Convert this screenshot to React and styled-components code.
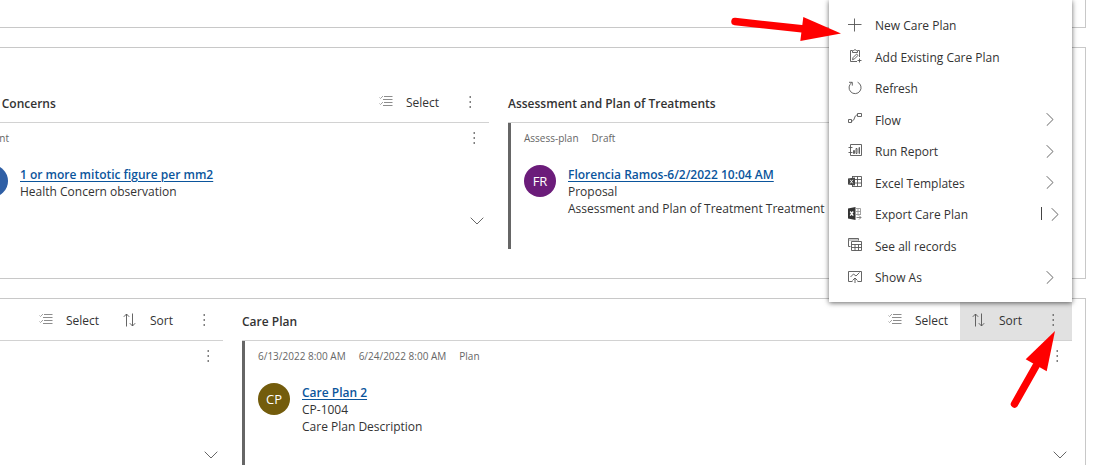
import React from "react";
import styled, { createGlobalStyle, css } from "styled-components";

const GlobalStyle = createGlobalStyle`
  * {
    box-sizing: border-box;
  }
  body {
    margin: 0;
    overflow: hidden;
    background: #ffffff;
    color: #333333;
    font-family: "Segoe UI", "Open Sans", "Noto Sans", sans-serif;
    font-size: 12px;
    line-height: 17px;
  }
`;

/* The form is scrolled sideways, its left gutter is outside the window */
const Page = styled.main`
  display: flex;
  flex-direction: column;
  gap: 19px;
  height: 100vh;
  margin-left: -40px;
  padding-right: 11px;
  overflow: hidden;
`;
const Section = styled.section`
  flex: none;
  display: grid;
  grid-template-columns: ${({ $columns }) => $columns || "1fr"};
  column-gap: 19px;
  padding: ${({ $top }) => $top || 0}px 13px 29px 0;
  border: 1px solid #c8c8c8;
  border-left: 0;
`;
const FirstSection = styled(Section)`
  height: 28px;
  padding: 0;
  border-top: 0;
`;
const Panel = styled.div`
  display: flex;
  flex-direction: column;
  min-width: 0;
`;
const PanelHeader = styled.header`
  position: relative;
  display: flex;
  align-items: stretch;
  height: 42px;
  border-bottom: 1px solid #d2d2d2;
`;
const Title = styled.h2`
  flex: 1;
  align-self: center;
  margin: 0;
  padding-top: 3px;
  font-size: 12px;
  font-weight: 600;
  white-space: nowrap;
`;
const IconButton = styled.button`
  display: flex;
  align-items: center;
  justify-content: center;
  padding: 0;
  border: 0;
  background: none;
  color: #333333;
  cursor: pointer;
`;
const CommandButton = styled(IconButton)`
  gap: 13px;
  padding: 0 12px;
  font: inherit;

  span {
    padding-top: 2px;
  }
  ${({ $active }) =>
    $active &&
    css`
      background: #e1e1e1;
    `}
`;
const MoreButton = styled(IconButton)`
  width: 38px;
  background: ${({ $active }) => ($active ? "#e1e1e1" : "none")};
`;
const Card = styled.article`
  display: flex;
  justify-content: space-between;
  min-height: ${({ $tall }) => ($tall ? 142 : 126)}px;
  padding: 7px 4px 20px 13px;
  border-left: 3px solid #666666;
`;
const Meta = styled.div`
  display: flex;
  gap: 13px;
  height: 35px;
  color: #666666;
  font-size: 10px;
`;
const Record = styled.div`
  display: flex;
  gap: 12px;
  white-space: nowrap;
`;
const RecordText = styled.div`
  padding-top: 1px;
`;
const Avatar = styled.div`
  flex: none;
  display: flex;
  align-items: center;
  justify-content: center;
  width: 32px;
  height: 32px;
  border-radius: 50%;
  background: ${({ $color }) => $color};
  color: #ffffff;
  font-size: 13px;
`;
const RecordLink = styled.a`
  color: #0b559c;
  font-weight: 600;
  text-underline-offset: 2px;
`;
const CardActions = styled.div`
  display: flex;
  flex-direction: column;
  justify-content: space-between;
  width: 16px;
`;
const CardMore = styled(IconButton)`
  width: 10px;
  height: 16px;
`;
const Expand = styled(IconButton)`
  width: 16px;
  height: 16px;
`;
const Menu = styled.ul`
  position: absolute;
  right: 0;
  bottom: calc(100% - 3px);
  z-index: 2;
  width: 243px;
  margin: 0;
  padding: 9px 0 10px;
  list-style: none;
  background: #ffffff;
  box-shadow: 0 1px 5px rgba(0, 0, 0, 0.6);
`;
const MenuItem = styled.li`
  display: flex;
  height: 31px;

  &:nth-child(even) {
    height: 32px;
  }
`;
const MenuButton = styled(IconButton)`
  flex: 1;
  justify-content: flex-start;
  gap: 13px;
  padding: 0 ${({ $split }) => ($split ? 13 : 18)}px 0 19px;
  font: inherit;

  span {
    flex: 1;
    padding-top: 2px;
    text-align: left;
  }
`;
const SplitChevron = styled.i`
  display: flex;
  align-items: center;
  padding-left: 10px;
  background: linear-gradient(#444444, #444444) left center / 1px 13px no-repeat;
`;
const Pointer = styled.svg`
  position: absolute;
  left: ${({ $x }) => $x}px;
  top: ${({ $y }) => $y}px;
  z-index: 3;
  fill: #ff0000;
  stroke: #ff0000;
  pointer-events: none;
`;

const Icon = ({ children, width = 14, height = 14 }) => (
  <svg
    width={width}
    height={height}
    viewBox={`0 0 ${width} ${height}`}
    fill="none"
    stroke="#555555"
    strokeWidth="0.9"
    aria-hidden="true"
  >
    {children}
  </svg>
);

const SelectIcon = () => (
  <Icon>
    <path d="M5 1.5h8.5M4 4.5h9.5M5 7.5h8.5M4 10.5h9.5" stroke="#808080" />
    <path d="M0.5 2.5l1 1L4 1M0.5 8.5l1 1L4 7" stroke="#999999" />
  </Icon>
);
const SortIcon = () => (
  <Icon>
    <path d="M3.5 13.5V1M0.8 3.8L3.5 1l2.7 2.8M9.5 0.5V13M6.8 10.2L9.5 13l2.7-2.8" />
  </Icon>
);
const DotsIcon = () => (
  <Icon width={2} height={12}>
    <path d="M0.5 1h1.5M0.5 6h1.5M0.5 11h1.5" strokeWidth="1.5" />
  </Icon>
);
const ChevronDown = () => (
  <Icon width={14} height={8}>
    <path d="M0.7 0.7L7 7l6.3-6.3" />
  </Icon>
);
const ChevronRight = () => (
  <Icon width={8} height={14}>
    <path d="M0.7 1.2L7 7.5l-6.3 6.3" />
  </Icon>
);

const menuIcons = {
  add: <path d="M6.5 0.5v13M0 6.5h13.5" />,
  clipboard: (
    <>
      <path d="M4 1.5H2.5v11H9M10 1.5h1.5V8M4.5 1.5h1.2L7 0.5l1.3 1h1.2v2h-5z" />
      <path d="M4.5 10.7l0.6-2.2L8.6 5l1.4 1.4-3.5 3.5zM11.5 9.5v4M9.5 11.5h4" />
    </>
  ),
  refresh: <path d="M3.8 1.6A6 6 0 1 0 9.6 1.2M1 1.3h3.3v3.3" />,
  flow: (
    <path d="M0.5 7.5h3v3h-3zM9.5 1.5h4v3h-4zM3.5 9c4 0 2-6 6-6" />
  ),
  report: (
    <path d="M2.5 0.5h11v11h-11zM0.5 3.5h4M0.5 8.5h4M5.5 6.5h1v3h-1zM8 4.5h1v5H8zM11 3.5h0.5v6H11z" />
  ),
  template: (
    <>
      <path d="M4 1.5h9.5v10H4M7 4.5h6.5M7 8h6.5M9.5 1.5v10M4.5 1.5v10" />
      <path d="M0 3.5l7-1v8l-7-1z" fill="#444444" stroke="none" />
      <path d="M2.2 4.8l2.6 3.6M4.8 4.8L2.2 8.4" stroke="#ffffff" />
    </>
  ),
  excel: (
    <>
      <path d="M0 1.5L7.5 0v13L0 11.5z" fill="#333333" stroke="none" />
      <path d="M2.2 4.5l3 4.2M5.2 4.5l-3 4.2" stroke="#ffffff" strokeWidth="1.3" />
      <path d="M7.5 1.5h5V8M7.5 4.5h5M7.5 7.5h5M10 1.5v7" stroke="#999999" />
      <path d="M8.5 10.5h4.5M11 8.5l2 2-2 2" stroke="#777777" />
    </>
  ),
  records: (
    <>
      <path d="M2.5 8.5h-2v-8h10v2" />
      <path d="M0.5 2h10" stroke="#888888" />
      <path d="M3.5 3.5h10v9h-10zM3.5 6.5h10M3.5 9.5h10M7 6.5v6M10.5 6.5v6" />
    </>
  ),
  showAs: (
    <path d="M4.5 11.5h-4v-10h13v10h-4M2.5 7l3-3L8 6l3.5-3.5M7 13V8M4.5 10.5L7 8l2.5 2.5" />
  ),
};

const menuItems = [
  { label: "New Care Plan", icon: "add" },
  { label: "Add Existing Care Plan", icon: "clipboard" },
  { label: "Refresh", icon: "refresh" },
  { label: "Flow", icon: "flow", submenu: true },
  { label: "Run Report", icon: "report", submenu: true },
  { label: "Excel Templates", icon: "template", submenu: true },
  { label: "Export Care Plan", icon: "excel", split: true },
  { label: "See all records", icon: "records" },
  { label: "Show As", icon: "showAs", submenu: true },
];

const CommandMenu = () => (
  <Menu>
    {menuItems.map(({ label, icon, submenu, split }) => (
      <MenuItem key={label}>
        <MenuButton type="button" $split={split}>
          <Icon>{menuIcons[icon]}</Icon>
          <span>{label}</span>
          {submenu && <ChevronRight />}
          {split && (
            <SplitChevron>
              <ChevronRight />
            </SplitChevron>
          )}
        </MenuButton>
      </MenuItem>
    ))}
  </Menu>
);

const Subgrid = ({ title, record, sort, menuOpen, tall }) => (
  <Panel>
    <PanelHeader>
      <Title>{title}</Title>
      <CommandButton type="button">
        <SelectIcon />
        <span>Select</span>
      </CommandButton>
      {sort && (
        <CommandButton type="button" $active={menuOpen}>
          <SortIcon />
          <span>Sort</span>
        </CommandButton>
      )}
      <MoreButton type="button" $active={menuOpen} aria-label="More commands">
        <DotsIcon />
      </MoreButton>
      {menuOpen && <CommandMenu />}
    </PanelHeader>
    <Card $tall={tall}>
      <div>
        {record && (
          <>
            <Meta>
              {record.meta.map((text) => (
                <span key={text}>{text}</span>
              ))}
            </Meta>
            <Record>
              <Avatar $color={record.color}>{record.initials}</Avatar>
              <RecordText>
                <RecordLink href="#">{record.name}</RecordLink>
                {record.lines.map((line) => (
                  <div key={line}>{line}</div>
                ))}
              </RecordText>
            </Record>
          </>
        )}
      </div>
      <CardActions>
        <CardMore type="button" aria-label="More actions">
          <DotsIcon />
        </CardMore>
        <Expand type="button" aria-label="Expand">
          <ChevronDown />
        </Expand>
      </CardActions>
    </Card>
  </Panel>
);

const concern = {
  meta: ["Patient"],
  color: "#2f5fa5",
  name: "1 or more mitotic figure per mm2",
  lines: ["Health Concern observation"],
};
const assessment = {
  meta: ["Assess-plan", "Draft"],
  initials: "FR",
  color: "#6b1c7a",
  name: "Florencia Ramos-6/2/2022 10:04 AM",
  lines: ["Proposal", "Assessment and Plan of Treatment Treatment"],
};
const carePlan = {
  meta: ["6/13/2022 8:00 AM", "6/24/2022 8:00 AM", "Plan"],
  initials: "CP",
  color: "#735c0c",
  name: "Care Plan 2",
  lines: ["CP-1004", "Care Plan Description"],
};

const App = () => {
  return (
    <>
      <GlobalStyle />
      <Page>
        <FirstSection />
        <Section $columns="529fr 564fr" $top={33}>
          <Subgrid title="Health Concerns" record={concern} />
          <Subgrid title="Assessment and Plan of Treatments" record={assessment} />
        </Section>
        <Section $columns="263fr 830fr">
          <Subgrid sort tall />
          <Subgrid title="Care Plan" record={carePlan} sort menuOpen tall />
        </Section>
      </Page>
      <Pointer $x={730} $y={10} width="112" height="36" viewBox="0 0 112 36">
        <path d="M5 11.5L74 19" strokeWidth="7.5" strokeLinecap="round" />
        <path d="M73.3 7L111 23.5 70.3 31z" stroke="none" />
      </Pointer>
      <Pointer $x={1008} $y={330} width="50" height="80" viewBox="0 0 50 80">
        <path d="M6.5 74L28 36" strokeWidth="7.5" strokeLinecap="round" />
        <path d="M47 1L17.7 29.3 38.7 41.3z" stroke="none" />
      </Pointer>
    </>
  );
};

export default App;
